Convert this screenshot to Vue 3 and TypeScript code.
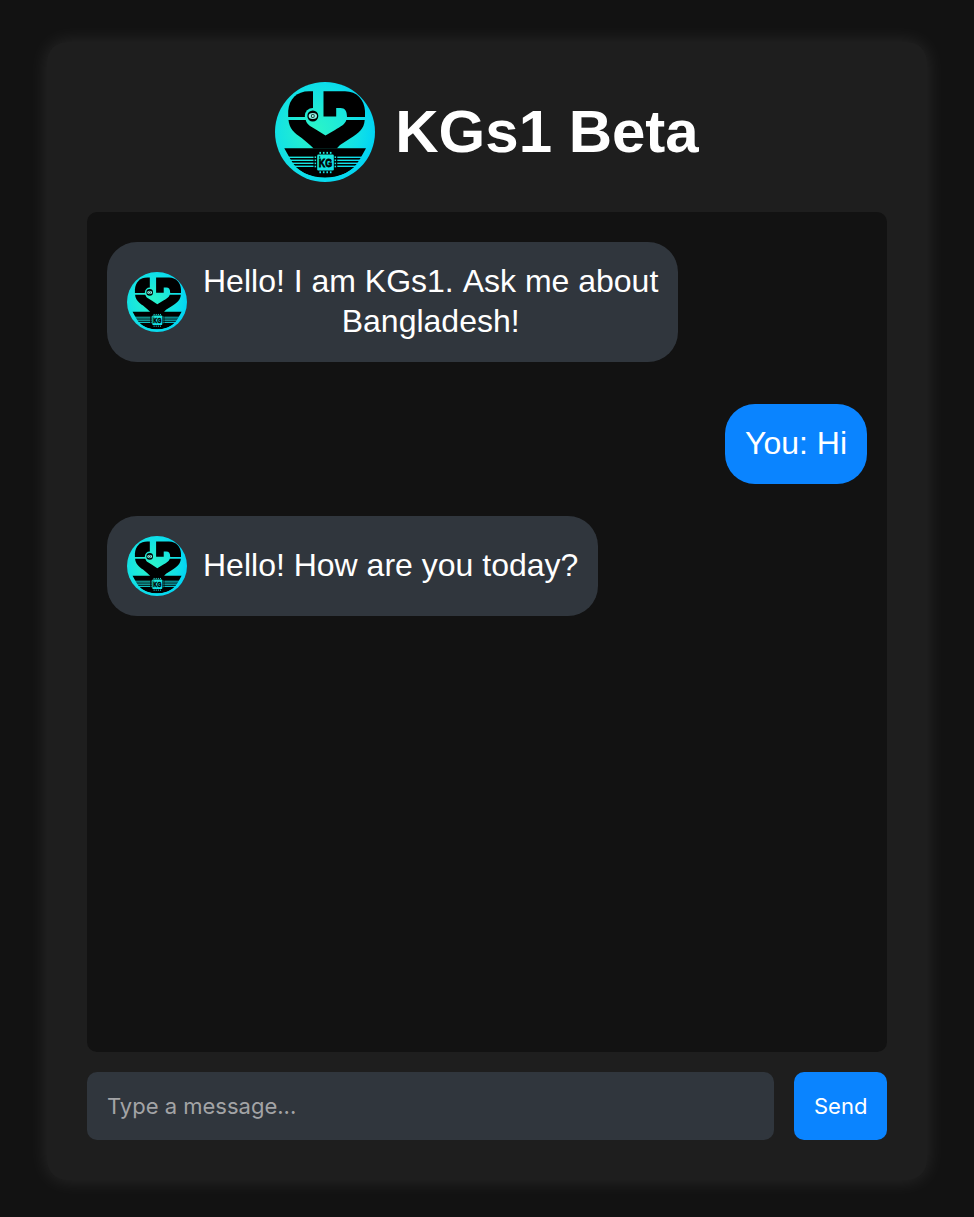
<script setup lang="ts">
import { ref, h } from 'vue'

interface Message {
  id: number
  from: 'bot' | 'user'
  text: string
}

const messages = ref<Message[]>([
  { id: 1, from: 'bot', text: 'Hello! I am KGs1. Ask me about\nBangladesh!' },
  { id: 2, from: 'user', text: 'You: Hi' },
  { id: 3, from: 'bot', text: 'Hello! How are you today?' },
])
const draft = ref('')

function send() {
  const text = draft.value.trim()
  if (!text) return
  messages.value.push({ id: Date.now(), from: 'user', text: `You: ${text}` })
  draft.value = ''
}

const wires = [75.3, 78.3, 81.3, 84.3]
const pins = [45.2, 48.7, 52.2, 55.7]
const sidePins = [75.2, 78.3, 81.4, 84.5]

const rect = (x: number, y: number, width: number, height: number, fill: string, rx = 0) =>
  h('rect', { x, y, width, height, fill, rx })

const Logo = () => {
  const glow = 'url(#logo-glow)'
  return h('svg', { viewBox: '0 0 100 100' }, [
    h('defs', [
      h('radialGradient', { id: 'logo-glow', gradientUnits: 'userSpaceOnUse', cx: 41, cy: 48, r: 60 }, [
        h('stop', { offset: '0', 'stop-color': '#2bf5c8' }),
        h('stop', { offset: '0.35', 'stop-color': '#20ebd5' }),
        h('stop', { offset: '0.75', 'stop-color': '#0fdfe8' }),
        h('stop', { offset: '1', 'stop-color': '#00d3f5' }),
      ]),
      h('clipPath', { id: 'logo-base' }, [h('circle', { cx: 50, cy: 50, r: 46 })]),
    ]),
    h('circle', { cx: 50, cy: 50, r: 50, fill: glow }),
    // heads
    h('path', { d: 'M38 9.3V35H13.2V29C14 17 22 9.3 34 9.3Z' }),
    h('path', { d: 'M48.5 9.3H70C82 9.3 89.5 18 90 29V35H72C72 29 70 26 65.5 26H61.2V34.4H48.5Z' }),
    // crossing necks
    h('path', { d: 'M13.5 38H30.7C31.5 41 33 42.5 35 43.9L41.7 48L50.5 53.6L60 48C65 45 70.5 42 71.3 38H89.7C89 47 84 51 75 56.5L65 63L61.7 66.5H38.7L35 63L26.7 56C19 51 14.2 46 13.5 38Z' }),
    // eye
    h('circle', { cx: 37.8, cy: 34, r: 8, fill: glow }),
    h('circle', { cx: 37.8, cy: 34, r: 5.5 }),
    h('ellipse', { cx: 37.8, cy: 34.1, rx: 4.2, ry: 3, fill: '#8df2e6' }),
    h('circle', { cx: 37.8, cy: 34.1, r: 2, fill: '#12483f' }),
    h('circle', { cx: 37.8, cy: 34.1, r: 1, fill: '#c8fff4' }),
    // base with circuit traces
    h('path', { d: 'M9.3 66.3H91L85 77C78 90 65 95.5 50 95.5C35 95.5 22 90 15.3 77Z', 'clip-path': 'url(#logo-base)' }),
    ...wires.flatMap((y, i) => [
      rect(12 + i * 1.8, y - 0.7, 26.5 - i * 1.8, 1.4, glow),
      rect(62.3, y - 0.7, 26 - i * 1.8, 1.4, glow),
    ]),
    ...pins.flatMap((x) => [
      rect(x - 0.8, 69.9, 1.6, 1.9, glow),
      rect(x - 0.8, 89.3, 1.6, 1.9, glow),
    ]),
    ...sidePins.flatMap((y) => [
      rect(39.6, y - 0.8, 1.5, 1.6, glow),
      rect(59.6, y - 0.8, 1.5, 1.6, glow),
    ]),
    rect(42.2, 72.6, 16.6, 15.8, glow, 1.2),
    h('circle', { cx: 44.6, cy: 75, r: 0.8 }),
    h('text', {
      x: 43.8, y: 85.1, 'font-size': 11.8, 'font-weight': 700,
      'font-family': 'Liberation Sans, Arial, sans-serif',
      textLength: 13.4, lengthAdjust: 'spacingAndGlyphs',
      stroke: '#000', 'stroke-width': 0.8,
    }, 'KG'),
  ])
}
</script>

<template>
  <main class="page">
    <section class="card">
      <header class="header">
        <Logo class="logo" />
        <h1>KGs1 Beta</h1>
      </header>
      <div class="chat">
        <div v-for="m in messages" :key="m.id" class="message" :class="m.from">
          <Logo v-if="m.from === 'bot'" class="avatar" />
          <span class="text">{{ m.text }}</span>
        </div>
      </div>
      <form class="composer" @submit.prevent="send">
        <input v-model="draft" type="text" placeholder="Type a message..." />
        <button type="submit">Send</button>
      </form>
    </section>
  </main>
</template>

<style>
body {
  background: #121212;
}
</style>

<style scoped>
.page {
  box-sizing: border-box;
  height: 1217px;
  padding-top: 42px;
  background: #121212;
  color: #fff;
  font-family: "Liberation Sans", Arial, sans-serif;
  overflow: hidden;
}
.card {
  box-sizing: border-box;
  width: 880px;
  margin: 0 auto;
  padding: 40px;
  background: #1e1e1e;
  border-radius: 20px;
  box-shadow: 0 0 20px rgba(255, 255, 255, 0.1);
}
.header {
  display: flex;
  align-items: center;
  justify-content: center;
  gap: 20px;
  height: 100px;
  margin-bottom: 30px;
}
.logo {
  display: block;
  width: 100px;
  height: 100px;
}
h1 {
  margin: 0;
  font-size: 60px;
  line-height: 68px;
  font-weight: 700;
}
.chat {
  box-sizing: border-box;
  display: flex;
  flex-direction: column;
  gap: 32px;
  height: 840px;
  padding: 30px 20px 20px;
  background: #121212;
  border-radius: 10px;
  overflow: hidden;
}
.message {
  display: flex;
  align-items: center;
  gap: 16px;
  padding: 20px;
  border-radius: 30px;
  font-size: 32px;
  line-height: 40px;
}
.bot {
  align-self: flex-start;
  background: #30363d;
  font-kerning: none;
}
.user {
  align-self: flex-end;
  margin-top: 10px;
  background: #0a84ff;
}
.avatar {
  display: block;
  flex: none;
  width: 60px;
  height: 60px;
}
.text {
  margin: -1px 0 1px;
  text-align: center;
  white-space: pre-line;
}
.composer {
  display: flex;
  gap: 20px;
  height: 68px;
  margin-top: 20px;
}
input,
button {
  box-sizing: border-box;
  border: 0;
  border-radius: 10px;
  padding: 0 20px;
  color: #fff;
  font-family: Inter, sans-serif;
  font-size: 22px;
  outline: none;
}
input {
  flex: 1;
  min-width: 0;
  background: #30363d;
}
input::placeholder {
  color: #a3a4a6;
  opacity: 1;
}
button {
  width: 93px;
  background: #0a84ff;
}
</style>
